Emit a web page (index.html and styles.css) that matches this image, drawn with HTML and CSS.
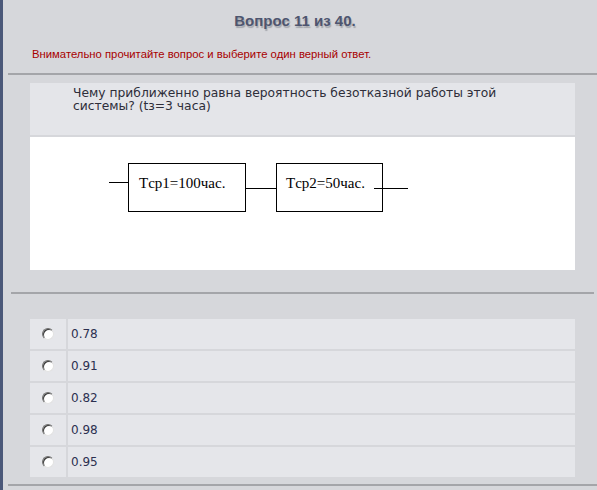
FILE: index.html
```html
<!DOCTYPE html>
<html lang="ru">
<head>
    <meta charset="UTF-8">
    <title>Вопрос 11 из 40</title>
    <link rel="stylesheet" href="styles.css">
</head>
<body>
    <div class="page">
        <h1 class="title">Вопрос 11 из 40.</h1>
        <p class="hint">Внимательно прочитайте вопрос и выберите один верный ответ.</p>
        <div class="rule"></div>

        <div class="question">
            <div class="qtext">Чему приближенно равна вероятность безотказной работы этой<br>системы? (tз=3 часа)</div>
            <div class="figure">
                <svg width="545" height="133" viewBox="0 0 545 133">
                    <g stroke="#000" stroke-width="1" fill="none" shape-rendering="crispEdges">
                        <line x1="79" y1="45.5" x2="98" y2="45.5"/>
                        <rect x="98.5" y="26.5" width="117" height="48"/>
                        <line x1="216" y1="51.5" x2="246" y2="51.5"/>
                        <rect x="246.5" y="26.5" width="106" height="48"/>
                        <line x1="344" y1="51.5" x2="378" y2="51.5"/>
                    </g>
                    <g font-family="Liberation Serif, serif" font-size="15" fill="#000">
                        <text x="109" y="51">Tср1=100час.</text>
                        <text x="256" y="51">Tср2=50час.</text>
                    </g>
                </svg>
            </div>
        </div>

        <div class="rule rule-mid"></div>

        <div class="answers">
            <label class="answer"><span class="pick"><span class="radio"></span></span><span class="value">0.78</span></label>
            <label class="answer"><span class="pick"><span class="radio"></span></span><span class="value">0.91</span></label>
            <label class="answer"><span class="pick"><span class="radio"></span></span><span class="value">0.82</span></label>
            <label class="answer"><span class="pick"><span class="radio"></span></span><span class="value">0.98</span></label>
            <label class="answer"><span class="pick"><span class="radio"></span></span><span class="value">0.95</span></label>
        </div>

        <div class="rule rule-bottom"></div>
    </div>
</body>
</html>
```

FILE: styles.css
```css
body {
    margin: 0;
    padding: 0;
    background-color: #d6d7db;
    font-family: "DejaVu Sans", Verdana, sans-serif;
}

.page {
    height: 490px;
    border-left: 3px solid #4b5879;
    box-sizing: border-box;
    overflow: hidden;
}

.title {
    margin: 0;
    padding-top: 12px;
    height: 20px;
    text-align: center;
    font-family: "Liberation Sans", Arial, sans-serif;
    font-size: 15px;
    font-weight: bold;
    color: #4e556f;
    text-shadow: 1px 2px 1px #a5a7ad;
    padding-right: 10px;
}

.hint {
    margin: 16px 0 0 29px;
    height: 14px;
    font-family: "Liberation Sans", Arial, sans-serif;
    font-size: 11.3px;
    color: #a80000;
}

.rule {
    margin: 11px 0 0 5px;
    border-top: 2px solid #a4a5a9;
}

.question {
    margin: 8px 22px 0 27px;
}

.qtext {
    height: 42px;
    padding: 4px 0 6px 43px;
    background-color: #e4e5e9;
    font-size: 12.3px;
    line-height: 13px;
    color: #2e2e3a;
}

.figure {
    margin-top: 2px;
    height: 133px;
    background-color: #fff;
}

.figure svg {
    display: block;
}

.rule-mid {
    margin: 22px 3px 0 8px;
}

.answers {
    margin: 25px 22px 0 27px;
}

.answer {
    display: flex;
    gap: 2px;
    height: 30px;
    margin-bottom: 2px;
}

.pick {
    width: 36px;
    display: flex;
    align-items: center;
    justify-content: center;
    background-color: #e5e6ea;
}

.radio {
    width: 10px;
    height: 10px;
    border-radius: 50%;
    border: 1px solid;
    border-color: #6e6e6e #e2e2e2 #e2e2e2 #6e6e6e;
    background-color: #fff;
    box-shadow: inset 1px 1px 0 #3a3a3a;
}

.value {
    flex: 1;
    display: flex;
    align-items: center;
    padding-left: 3px;
    background-color: #e5e6ea;
    font-size: 12px;
    color: #2c3050;
}

.rule-bottom {
    margin: 7px 0 0 5px;
}
```
